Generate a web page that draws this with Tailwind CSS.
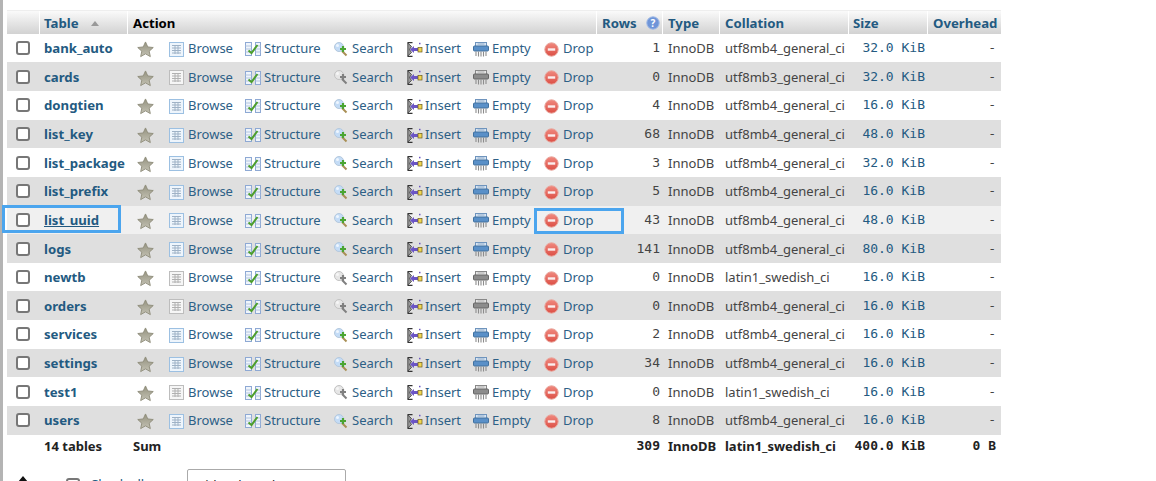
<!DOCTYPE html>
<html lang="en">
<head>
  <meta charset="UTF-8" />
  <title>phpMyAdmin - Tables</title>
  <script src="https://cdn.jsdelivr.net/npm/@tailwindcss/browser@4"></script>
</head>
<body class="h-[481px] overflow-hidden bg-white font-['Noto_Sans',sans-serif] text-[13px] leading-[20px] text-[#444]">

  <!-- icon set -->
  <svg class="absolute h-0 w-0">
    <defs>
      <linearGradient id="dropfill" x1="0" y1="0" x2="0" y2="1">
        <stop offset="0" stop-color="#f0897f"/>
        <stop offset="1" stop-color="#dc4f45"/>
      </linearGradient>
      <linearGradient id="starfill" x1="0" y1="0" x2="0" y2="1">
        <stop offset="0" stop-color="#94927f"/>
        <stop offset="1" stop-color="#c4c2b4"/>
      </linearGradient>
    </defs>
    <symbol id="star" viewBox="0 0 18 18">
      <path d="M9 1l2.400 5.300 5.800.6-4.300 3.900 1.200 5.700L9 13.600l-5.100 2.900 1.200-5.700L.8 6.900l5.800-.6z" fill="url(#starfill)" stroke="#8f8d7b" stroke-width="1"/>
    </symbol>
    <symbol id="browse" viewBox="0 0 15 15">
      <rect x=".5" y=".5" width="14" height="14" fill="#eef5fc" stroke="#9cc0e2"/>
      <path d="M3 3.500h9M3 6h9M3 8.500h9M3 11h9M6 3v9M9 3v9" stroke="#9fb2c6" stroke-width="1" fill="none"/>
    </symbol>
    <symbol id="browse-off" viewBox="0 0 15 15">
      <rect x=".5" y=".5" width="14" height="14" fill="#f6f6f6" stroke="#bdbdbd"/>
      <path d="M3 3.500h9M3 6h9M3 8.500h9M3 11h9M6 3v9M9 3v9" stroke="#b0b0b0" stroke-width="1" fill="none"/>
    </symbol>
    <symbol id="structure" viewBox="0 0 16 14">
      <rect x=".5" y=".5" width="6" height="13" fill="#f0f5fb" stroke="#8ea9d4"/>
      <rect x="10.500" y=".5" width="5" height="13" fill="#f0f5fb" stroke="#8ea9d4"/>
      <path d="M.5 4h6M.5 7h6M.5 10h6M10.500 4h5M10.500 7h5M10.500 10h5" stroke="#b3c5e0"/>
      <path d="M3.500 8.500l3 2.500 6-8" stroke="#4c9e2c" stroke-width="2" fill="none"/>
    </symbol>
    <symbol id="search" viewBox="0 0 14 15">
      <circle cx="5" cy="5" r="4.500" fill="#c4dcf6" stroke="#b4c8dd"/>
      <circle cx="3.500" cy="3.500" r="1.500" fill="#eef6fe"/>
      <path d="M8 9l4.500 4.500" stroke="#a98f55" stroke-width="2"/>
      <path d="M9 4v6M6 7h6" stroke="#4aa532" stroke-width="2.200"/>
    </symbol>
    <symbol id="search-off" viewBox="0 0 14 15">
      <circle cx="5" cy="5" r="4.500" fill="#e6e6e6" stroke="#c2c2c2"/>
      <circle cx="3.500" cy="3.500" r="1.500" fill="#f6f6f6"/>
      <path d="M8 9l4.500 4.500" stroke="#808080" stroke-width="2"/>
      <path d="M9 4v6M6 7h6" stroke="#808080" stroke-width="2.200"/>
    </symbol>
    <symbol id="insert" viewBox="0 0 16 15">
      <path d="M5.500 .6H.5M5.500 14.400H.5" stroke="#333" stroke-width="1.200"/>
      <path d="M.8 1l3.700 3.500-2 3 2 3L.8 14z" fill="#999" stroke="#333" stroke-width=".8"/>
      <path d="M3 7.500l4-3.500v2h4v3H7v2z" fill="#6b55c4"/>
      <rect x="11" y="5.500" width="4" height="4.500" fill="#f0d650" stroke="#6a5a1a" stroke-width=".7"/>
      <rect x="12" y=".8" width="1.500" height="1.500" fill="#6b55c4"/>
    </symbol>
    <symbol id="empty" viewBox="0 0 16 15">
      <rect x="2.500" y=".5" width="11" height="4" fill="#dbe7f4" stroke="#6f94bd"/>
      <path d="M4.500 2h7" stroke="#8aa8c8"/>
      <rect x=".5" y="4" width="15" height="5" rx="1" fill="#5a90c8" stroke="#41719f"/>
      <path d="M3 9.500v4.500M5.500 9.500v5M8 9.500v5M10.500 9.500v5M13 9.500v4.500" stroke="#8c8c8c" stroke-width="1.100"/>
    </symbol>
    <symbol id="empty-off" viewBox="0 0 16 15">
      <rect x="2.500" y=".5" width="11" height="4" fill="#e8e8e8" stroke="#888"/>
      <path d="M4.500 2h7" stroke="#aaa"/>
      <rect x=".5" y="4" width="15" height="5" rx="1" fill="#8c8c8c" stroke="#666"/>
      <path d="M3 9.500v4.500M5.500 9.500v5M8 9.500v5M10.500 9.500v5M13 9.500v4.500" stroke="#8c8c8c" stroke-width="1.100"/>
    </symbol>
    <symbol id="drop" viewBox="0 0 15 15">
      <circle cx="7.500" cy="7.500" r="6.700" fill="url(#dropfill)" stroke="#e8a79e" stroke-width="1"/>
      <rect x="3.800" y="6.300" width="7.400" height="2.400" fill="#fbeeee"/>
    </symbol>
  </svg>

  <!-- left frame edge -->
  <div class="fixed left-0 top-0 bottom-0 w-[3px] bg-[#b4b4b4]"></div>

  <main class="ml-[7px] w-[994px] pt-[10px]">
    <!-- header -->
    <div class="flex h-[23.85px] border-t border-[#eee] bg-gradient-to-b from-[#fafafa] to-[#d2d2d2] text-[13.2px] font-bold text-[#235a81] leading-[24px]">
      <div class="w-[33px] border-r border-white"></div>
      <div class="flex h-[24px] w-[88px] items-center border-r border-white pl-[4px]">
        Table
        <span class="ml-[12px] h-0 w-0 border-x-[4px] border-b-[5px] border-x-transparent border-b-[#999]"></span>
      </div>
      <div class="w-[469px] border-r border-white pl-[5px] text-black">Action</div>
      <div class="flex h-[24px] w-[66px] items-center border-r border-white pl-[5px]">
        Rows
        <svg class="ml-[9px] h-[14px] w-[14px]" viewBox="0 0 14 14">
          <circle cx="7" cy="7" r="6.200" fill="#6f95d8" stroke="#9db8e6"/>
          <text x="7" y="10.500" text-anchor="middle" font-size="10" font-weight="700" fill="#fff">?</text>
        </svg>
      </div>
      <div class="w-[57px] border-r border-white pl-[5px]">Type</div>
      <div class="w-[129px] border-r border-white pl-[5px]">Collation</div>
      <div class="w-[79px] border-r border-white pl-[4px]">Size</div>
      <div class="w-[73px] pl-[5px]">Overhead</div>
    </div>

    <div id="rows"></div>

    <!-- sum row -->
    <div class="flex h-[23px] items-center font-bold text-[#222]">
      <div class="w-[33px]"></div>
      <div class="w-[88px] pl-[4px]">14 tables</div>
      <div class="w-[469px] pl-[5px]">Sum</div>
      <div class="w-[66px] pr-[3px] text-right font-['DejaVu_Sans_Mono',monospace]">309</div>
      <div class="w-[57px] pl-[5px]">InnoDB</div>
      <div class="w-[129px] pl-[5px]">latin1_swedish_ci</div>
      <div class="w-[79px] pr-[3px] text-right font-['DejaVu_Sans_Mono',monospace]">400.0 KiB</div>
      <div class="w-[73px] pr-[5px] text-right font-['DejaVu_Sans_Mono',monospace]">0 B</div>
    </div>

    <!-- with selected -->
    <div class="mt-[11.200px] flex h-[24px] items-start">
      <svg class="ml-[9px] mt-[7px] h-[14px] w-[14px]" viewBox="0 0 14 14"><path d="M7 0l5 6H9v8H5V6H2z" fill="#111"/></svg>
      <input type="checkbox" class="ml-[36px] mt-[9px] h-[14px] w-[14px] appearance-none rounded-[3px] border-2 border-[#777] bg-white" />
      <a class="ml-[10px] mt-[5px] text-[#235a81]">Check all</a>
      <div class="ml-[43px] h-[30px] w-[159px] rounded-[2px] border border-[#aaa] bg-white pl-[5px] pt-[5px] text-[#222]">With selected:</div>
    </div>
  </main>

  <!-- highlight boxes -->
  <div class="absolute left-[2px] top-[205px] h-[28px] w-[119px] border-[3px] border-[#4ba5ee]"></div>
  <div class="absolute left-[534px] top-[208px] h-[26px] w-[90px] border-[3px] border-[#4ba5ee]"></div>

  <script>
    const tables = [
      ['bank_auto', 1, 'utf8mb4_general_ci', '32.0'],
      ['cards', 0, 'utf8mb3_general_ci', '32.0'],
      ['dongtien', 4, 'utf8mb4_general_ci', '16.0'],
      ['list_key', 68, 'utf8mb4_general_ci', '48.0'],
      ['list_package', 3, 'utf8mb4_general_ci', '32.0'],
      ['list_prefix', 5, 'utf8mb4_general_ci', '16.0'],
      ['list_uuid', 43, 'utf8mb4_general_ci', '48.0'],
      ['logs', 141, 'utf8mb4_general_ci', '80.0'],
      ['newtb', 0, 'latin1_swedish_ci', '16.0'],
      ['orders', 0, 'utf8mb4_general_ci', '16.0'],
      ['services', 2, 'utf8mb4_general_ci', '16.0'],
      ['settings', 34, 'utf8mb4_general_ci', '16.0'],
      ['test1', 0, 'latin1_swedish_ci', '16.0'],
      ['users', 8, 'utf8mb4_general_ci', '16.0'],
    ];

    const rows = document.getElementById('rows');

    tables.forEach(([name, count, collation, size], i) => {
      const off = count === 0 ? '-off' : '';
      const hovered = name === 'list_uuid';
      const bg = hovered ? 'bg-[#f0f0f0]' : i % 2 ? 'bg-[#dfdfdf]' : 'bg-white';
      const row = document.createElement('div');
      row.className = `flex h-[28.64px] items-center ${bg}`;
      row.innerHTML = `
        <div class="flex w-[33px] justify-center pr-[1px]">
          <input type="checkbox" class="h-[14px] w-[14px] appearance-none rounded-[3px] border-2 border-[#777] bg-white" />
        </div>
        <a class="w-[88px] pl-[4px] text-[13.2px] font-bold text-[#235a81] ${hovered ? 'underline' : ''}">${name}</a>
        <div class="flex w-[469px] items-center pl-[9px] text-[#2d6086]">
          <span class="w-[32px]"><svg class="mt-[3px] h-[17px] w-[17px]"><use href="#star"/></svg></span>
          <span class="flex w-[76px] items-center gap-[4px]"><svg class="mt-[2px] h-[15px] w-[15px]"><use href="#browse${off}"/></svg>Browse</span>
          <span class="flex w-[89px] items-center gap-[3px]"><svg class="mt-[2px] h-[14px] w-[16px]"><use href="#structure"/></svg>Structure</span>
          <span class="flex w-[73px] items-center gap-[4px]"><svg class="mt-[2px] h-[15px] w-[14px]"><use href="#search${off}"/></svg>Search</span>
          <span class="flex w-[66px] items-center gap-[2px]"><svg class="mt-[2px] h-[15px] w-[16px]"><use href="#insert"/></svg>Insert</span>
          <span class="flex w-[71px] items-center gap-[3px]"><svg class="mt-[2px] h-[15px] w-[16px]"><use href="#empty${off}"/></svg>Empty</span>
          <span class="flex items-center gap-[4px]"><svg class="mt-[2px] h-[15px] w-[15px]"><use href="#drop"/></svg>Drop</span>
        </div>
        <div class="w-[66px] pr-[3px] text-right font-['DejaVu_Sans_Mono',monospace]">${count}</div>
        <div class="w-[57px] pl-[5px]">InnoDB</div>
        <div class="w-[129px] pl-[5px]">${collation}</div>
        <div class="w-[79px] pr-[3px] text-right font-['DejaVu_Sans_Mono',monospace] text-[#235a81]">${size} KiB</div>
        <div class="w-[73px] pr-[5px] text-right font-['DejaVu_Sans_Mono',monospace]">-</div>
      `;
      rows.appendChild(row);
    });
  </script>
</body>
</html>
